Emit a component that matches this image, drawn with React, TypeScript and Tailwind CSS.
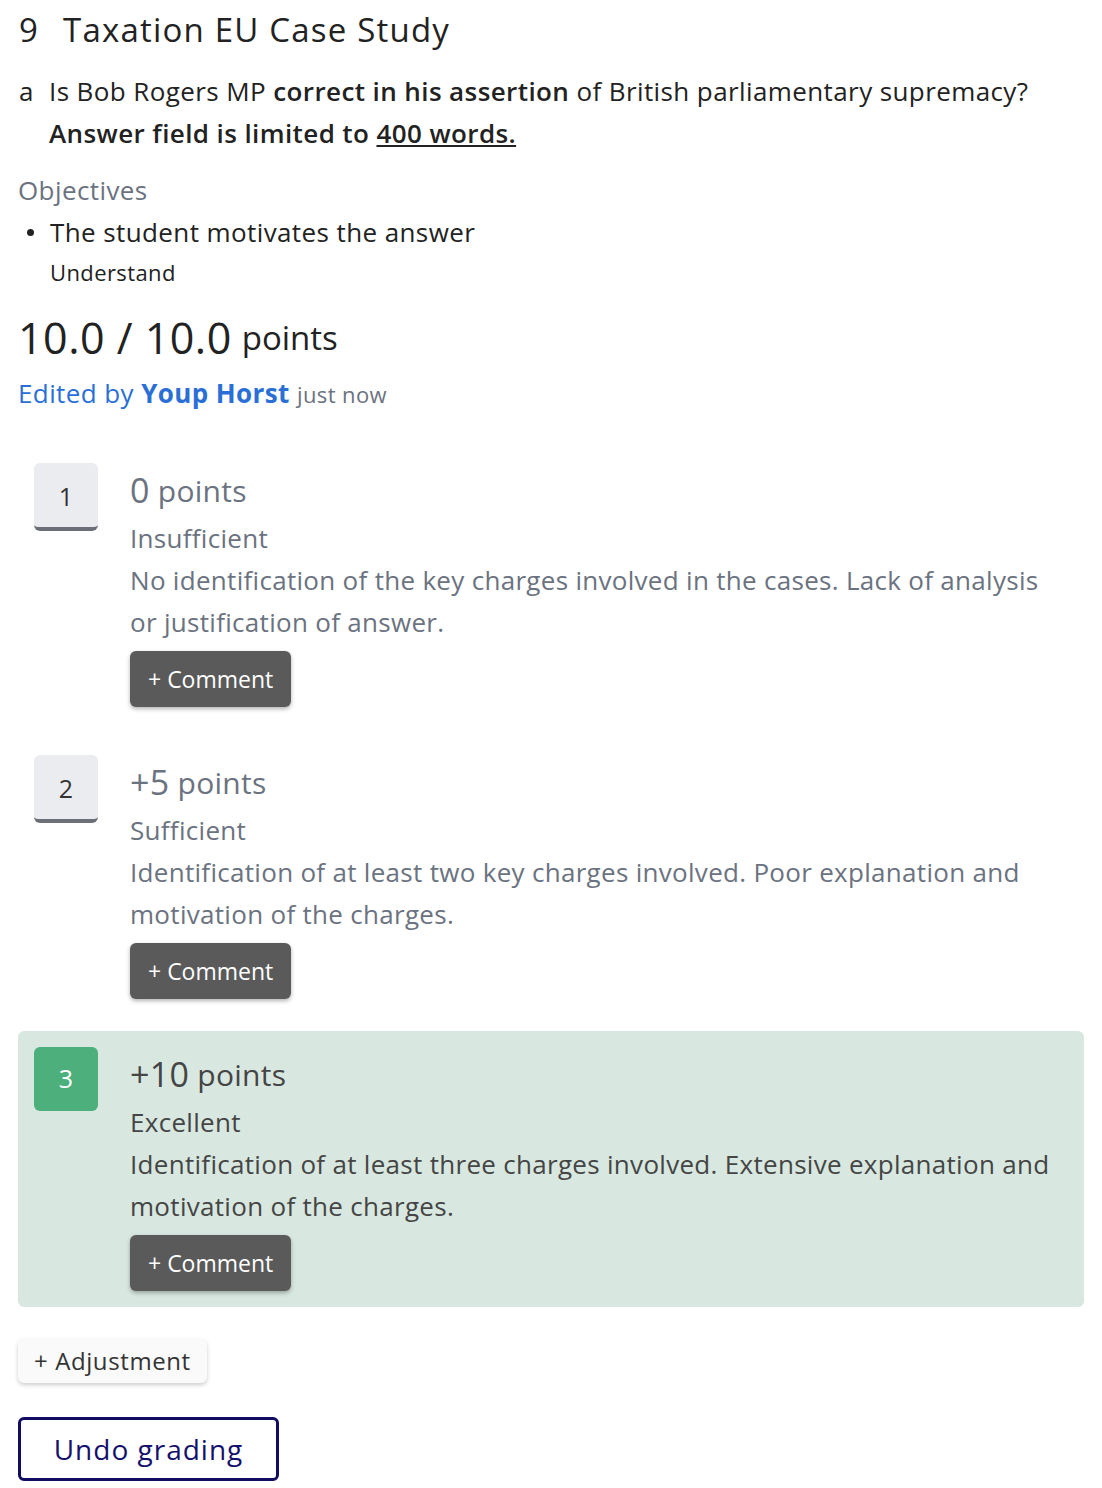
import React from "react";

const body = { fontFamily: "'Open Sans', 'Noto Sans', sans-serif" } as const;
const head = { fontFamily: "'Open Sans', Inter, sans-serif" } as const;

type Crit = { n: number; pts: string; prefix: string; title: string; desc: string; active?: boolean };

const crits: Crit[] = [
  { n: 1, prefix: "", pts: "0", title: "Insufficient", desc: "No identification of the key charges involved in the cases. Lack of analysis or justification of answer." },
  { n: 2, prefix: "+", pts: "5", title: "Sufficient", desc: "Identification of at least two key charges involved. Poor explanation and motivation of the charges." },
  { n: 3, prefix: "+", pts: "10", title: "Excellent", desc: "Identification of at least three charges involved. Extensive explanation and motivation of the charges.", active: true },
];

function Row({ c }: { c: Crit }) {
  return (
    <div className={`flex gap-8 p-4 rounded-md ${c.active ? "bg-[#d8e8e0]" : ""}`}>
      {c.active ? (
        <div className="w-16 h-16 shrink-0 rounded-md bg-[#4caf7c] text-white flex items-center justify-center text-[25px] font-medium">{c.n}</div>
      ) : (
        <div className="w-16 h-[68px] shrink-0 rounded-md bg-[#ebecf0] border-b-4 border-[#6b7078] text-[#333] flex items-center justify-center text-[25px] font-medium pt-1">{c.n}</div>
      )}
      <div className={`flex flex-col items-start min-w-0 tracking-[0.3px] ${c.active ? "text-[#454545]" : "text-[#6b7280]"}`}>
        <div className="h-[54px] flex items-center">
          <span className="text-[34px] font-medium">{c.prefix}{c.pts}</span>
          <span className="text-[30px] ml-2">points</span>
        </div>
        <div className="text-[26px] leading-[42px]">{c.title}</div>
        <div className="text-[26px] leading-[42px]">{c.desc}</div>
        <button className="mt-2 h-14 px-[18px] rounded-md bg-[#5a5a5a] text-white text-[23px] tracking-normal shadow-[0_2px_4px_rgba(0,0,0,0.3)]">+ Comment</button>
      </div>
    </div>
  );
}

export default function App() {
  return (
    <div className="bg-white w-[1102px] min-h-[1488px] px-[18px] text-[#222]" style={body}>
      <div className="h-[60px] flex items-center text-[33px] font-medium text-[#222] tracking-[1.2px]" style={head}>
        <span className="w-[45px] pl-[1px]">9</span>
        <span>Taxation EU Case Study</span>
      </div>
      <div className="mt-[10px] flex text-[26px] leading-[42px] tracking-[0.4px]">
        <span className="w-[31px] pl-[1px]">a</span>
        <div>
          <div>Is Bob Rogers MP <span className="font-semibold">correct in his assertion</span> of British parliamentary supremacy?</div>
          <div className="font-semibold">Answer field is limited to <span className="underline">400 words.</span></div>
        </div>
      </div>
      <div className="mt-[15px] text-[26px] leading-[42px] text-[#6b7280] tracking-[0.4px]">Objectives</div>
      <div className="flex text-[26px] leading-[42px] tracking-[0.4px]">
        <span className="w-[32px] flex items-start pt-[18px] pl-[9px]">
          <span className="w-[7px] h-[7px] rounded-full bg-[#222]" />
        </span>
        <div>
          <div>The student motivates the answer</div>
          <div className="text-[22px] leading-[38px]">Understand</div>
        </div>
      </div>
      <div className="mt-[17px] h-[60px] flex items-center">
        <span className="text-[43px] font-medium tracking-[0.5px]">10.0 / 10.0</span>
        <span className="text-[33px] ml-[10px]">points</span>
      </div>
      <div className="mt-[4px] leading-[42px] text-[#2a6fd6] text-[26px] tracking-[0.4px]">
        Edited by <span className="font-bold">Youp Horst</span> <span className="text-[22px] text-[#6b7280]">just now</span>
      </div>
      <div className="mt-[32px] flex flex-col gap-4">
        {crits.map((c) => (
          <Row key={c.n} c={c} />
        ))}
      </div>
      <button className="mt-8 h-11 px-4 rounded-md bg-[#fafafa] text-[#333] text-[24px] font-medium tracking-[0.6px] shadow-[0_2px_4px_rgba(0,0,0,0.2)]" style={head}>
        + Adjustment
      </button>
      <div>
        <button className="mt-[34px] h-16 w-[261px] rounded-md border-[3px] border-[#120b62] text-[#15106b] text-[28px] font-medium tracking-[1px]" style={head}>
          Undo grading
        </button>
      </div>
    </div>
  );
}
